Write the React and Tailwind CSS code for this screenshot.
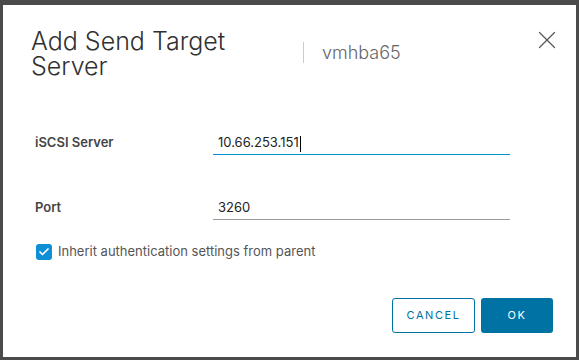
import React from 'react';
import { X, Check } from 'lucide-react';

const font = { fontFamily: 'Inter, "Open Sans", sans-serif' };

export default function App() {
  return (
    <div className="w-[579px] h-[360px] bg-[#4b4b4b] pt-[5px] pl-[3px] overflow-hidden" style={font}>
      <div className="w-[573px] h-[352px] bg-white flex flex-col">
        {/* Header */}
        <div className="flex items-start pt-[24px] pl-[28px] pr-[14px]">
          <h2 className="w-[250px] text-[25px] leading-[25px] font-light text-[#313131]">Add Send Target Server</h2>
          <div className="ml-[22px] mt-[13px] flex items-center">
            <div className="w-px h-[21px] bg-[#cccccc]" />
            <span className="ml-[18px] text-[18px] leading-[21px] font-light text-[#666666]">vmhba65</span>
          </div>
          <button className="ml-auto -mt-[4px] text-[#565656]">
            <X className="w-[30px] h-[30px]" strokeWidth={1.05} />
          </button>
        </div>

        {/* Form */}
        <div className="mt-[48px] pl-[32px] flex flex-col">
          <div className="flex items-end h-[28px]">
            <label className="w-[178px] pb-[3px] text-[13px] font-semibold text-[#454545]">iSCSI Server</label>
            <div className="w-[297px] h-full flex items-end border-b border-[#0094d2] pb-[2px] pl-[5px]">
              <span className="text-[13px] text-[#222222]">10.66.253.151</span>
              <span className="w-px h-[16px] bg-black ml-px" />
            </div>
          </div>
          <div className="flex items-end h-[28px] mt-[37px]">
            <label className="w-[178px] pb-[3px] text-[13px] font-semibold text-[#454545]">Port</label>
            <div className="w-[297px] h-full flex items-end border-b border-[#9a9a9a] pb-[2px] pl-[5px]">
              <span className="text-[13px] text-[#222222]">3260</span>
            </div>
          </div>
          <div className="flex items-center mt-[22px] pl-[1px]">
            <div className="w-[16px] h-[16px] rounded-[3px] bg-[#0f8fd6] flex items-center justify-center">
              <Check className="w-[12px] h-[12px] text-white" strokeWidth={3.5} />
            </div>
            <span className="ml-[6px] text-[13px] text-[#565656]">Inherit authentication settings from parent</span>
          </div>
        </div>

        {/* Footer */}
        <div className="mt-auto mb-[24px] flex justify-end gap-[6px] pr-[23px]">
          <button className="w-[83px] h-[35px] rounded-[3px] border border-[#0072a3] text-[#0072a3] text-[11px] font-normal tracking-[0.14em]">CANCEL</button>
          <button className="w-[72px] h-[35px] rounded-[3px] bg-[#0072a3] text-white text-[11px] font-normal tracking-[0.14em]">OK</button>
        </div>
      </div>
    </div>
  );
}
